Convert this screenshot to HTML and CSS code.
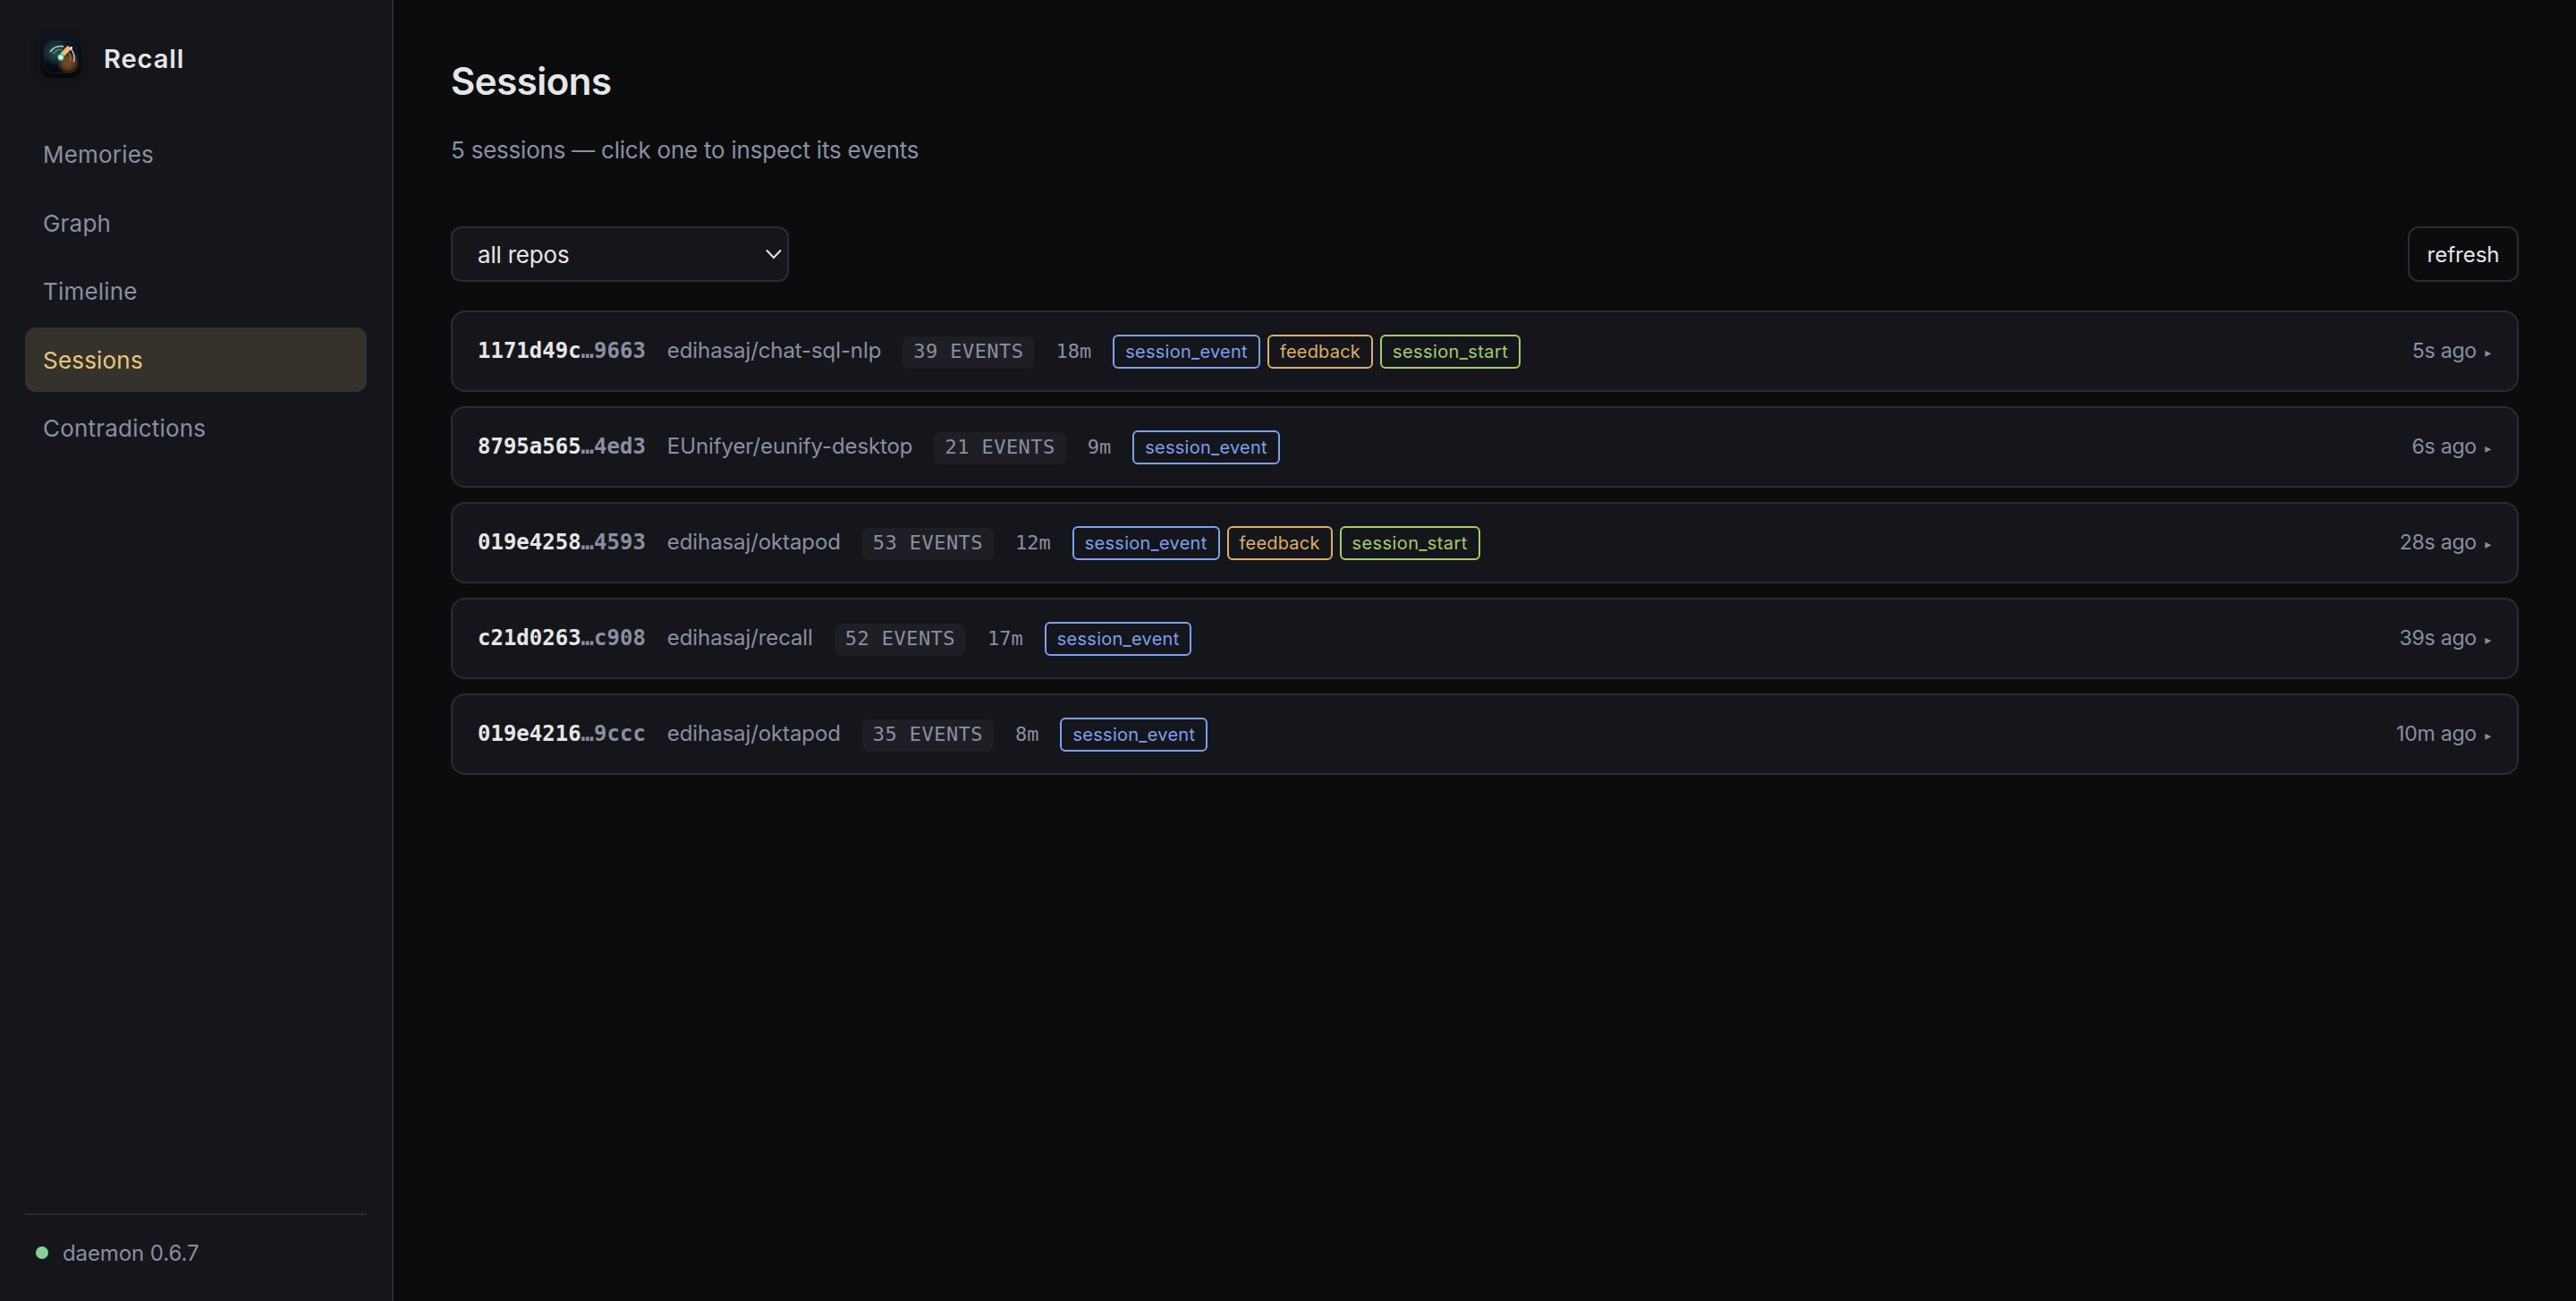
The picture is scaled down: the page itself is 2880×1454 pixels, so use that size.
FILE: index.html
```html
<!DOCTYPE html>
<html lang="en">
<head>
    <meta charset="UTF-8">
    <meta name="viewport" content="width=device-width, initial-scale=1.0">
    <title>Recall</title>
    <link rel="stylesheet" href="styles.css">
</head>
<body>
    <aside class="sidebar">
        <div class="brand">
            <svg class="logo" viewBox="0 0 56 56">
                <defs>
                    <linearGradient id="tile" x1="0" y1="0" x2="0" y2="1">
                        <stop offset="0" stop-color="#0b1520"/>
                        <stop offset="1" stop-color="#07080b"/>
                    </linearGradient>
                    <radialGradient id="teal">
                        <stop offset="0" stop-color="#2a6a66" stop-opacity=".85"/>
                        <stop offset="1" stop-color="#2a6a66" stop-opacity="0"/>
                    </radialGradient>
                    <radialGradient id="amber">
                        <stop offset="0" stop-color="#7d5228" stop-opacity=".95"/>
                        <stop offset=".5" stop-color="#7d5228" stop-opacity=".75"/>
                        <stop offset="1" stop-color="#7d5228" stop-opacity="0"/>
                    </radialGradient>
                    <radialGradient id="core">
                        <stop offset="0" stop-color="#ffffff"/>
                        <stop offset=".4" stop-color="#c8fff0"/>
                        <stop offset="1" stop-color="#35b59c"/>
                    </radialGradient>
                </defs>
                <rect width="56" height="56" rx="14" fill="#131418"/>
                <rect x="5" y="5" width="46" height="46" rx="11" fill="url(#tile)"/>
                <circle cx="22" cy="22" r="16" fill="url(#teal)"/>
                <circle cx="36" cy="34" r="13" fill="url(#amber)"/>
                <rect x="10.500" y="10.500" width="35" height="35" rx="9" fill="none" stroke="#ffffff" stroke-opacity=".07"/>
                <path d="M16 22A15 15 0 0 1 31 16" fill="none" stroke="#c9dedd" stroke-width="1.300"/>
                <path d="M39 18.500A15 15 0 0 1 42.500 33" fill="none" stroke="#e0d8cc" stroke-width="1.300"/>
                <path d="M19.500 24A10.500 10.500 0 0 1 29 19.500" fill="none" stroke="#9fc0be" stroke-opacity=".7"/>
                <path d="M37 22.500A10.500 10.500 0 0 1 38.500 32" fill="none" stroke="#c9b090" stroke-opacity=".7"/>
                <path d="M27.500 23.500L36 14.800L39.500 19.200L32 26.500Z" fill="#f5b766"/>
                <circle cx="39.500" cy="17.500" r="1.500" fill="#fff3dc"/>
                <circle cx="28" cy="28" r="3.700" fill="url(#core)"/>
            </svg>
            <span class="brand-name">Recall</span>
        </div>
        <nav class="nav">
            <a class="nav-item">Memories</a>
            <a class="nav-item">Graph</a>
            <a class="nav-item">Timeline</a>
            <a class="nav-item active">Sessions</a>
            <a class="nav-item">Contradictions</a>
        </nav>
        <div class="status">
            <span class="dot"></span>
            <span>daemon 0.6.7</span>
        </div>
    </aside>

    <main class="content">
        <h1>Sessions</h1>
        <p class="subtitle">5 sessions — click one to inspect its events</p>

        <div class="toolbar">
            <div class="select-wrap">
                <select class="repo-select">
                    <option>all repos</option>
                </select>
                <svg class="chevron" viewBox="0 0 18 12"><path d="M1 1.500L9 10L17 1.500" fill="none" stroke="#e6e6e6" stroke-width="2"/></svg>
            </div>
            <button class="refresh">refresh</button>
        </div>

        <div class="session-list">
            <div class="session">
                <span class="sid">1171d49c<span class="sid-end">…9663</span></span>
                <span class="repo">edihasaj/chat-sql-nlp</span>
                <span class="count">39 EVENTS</span>
                <span class="duration">18m</span>
                <span class="tags">
                    <span class="tag event">session_event</span>
                    <span class="tag feedback">feedback</span>
                    <span class="tag start">session_start</span>
                </span>
                <span class="ago">5s ago <span class="arrow">▸</span></span>
            </div>
            <div class="session">
                <span class="sid">8795a565<span class="sid-end">…4ed3</span></span>
                <span class="repo">EUnifyer/eunify-desktop</span>
                <span class="count">21 EVENTS</span>
                <span class="duration">9m</span>
                <span class="tags">
                    <span class="tag event">session_event</span>
                </span>
                <span class="ago">6s ago <span class="arrow">▸</span></span>
            </div>
            <div class="session">
                <span class="sid">019e4258<span class="sid-end">…4593</span></span>
                <span class="repo">edihasaj/oktapod</span>
                <span class="count">53 EVENTS</span>
                <span class="duration">12m</span>
                <span class="tags">
                    <span class="tag event">session_event</span>
                    <span class="tag feedback">feedback</span>
                    <span class="tag start">session_start</span>
                </span>
                <span class="ago">28s ago <span class="arrow">▸</span></span>
            </div>
            <div class="session">
                <span class="sid">c21d0263<span class="sid-end">…c908</span></span>
                <span class="repo">edihasaj/recall</span>
                <span class="count">52 EVENTS</span>
                <span class="duration">17m</span>
                <span class="tags">
                    <span class="tag event">session_event</span>
                </span>
                <span class="ago">39s ago <span class="arrow">▸</span></span>
            </div>
            <div class="session">
                <span class="sid">019e4216<span class="sid-end">…9ccc</span></span>
                <span class="repo">edihasaj/oktapod</span>
                <span class="count">35 EVENTS</span>
                <span class="duration">8m</span>
                <span class="tags">
                    <span class="tag event">session_event</span>
                </span>
                <span class="ago">10m ago <span class="arrow">▸</span></span>
            </div>
        </div>
    </main>
</body>
</html>
```

FILE: styles.css
```css
*{
    box-sizing: border-box;
}
body{
    margin: 0;
    height: 100vh;
    display: flex;
    background-color: #0b0c0e;
    color: #e6e6e6;
    font-family: Inter, "Liberation Sans", sans-serif;
    font-size: 26px;
    line-height: 39px;
}

/* sidebar */
.sidebar{
    width: 440px;
    flex-shrink: 0;
    display: flex;
    flex-direction: column;
    padding: 36px 28px 32px;
    background-color: #15161b;
    border-right: 2px solid #2b2b34;
}
.brand{
    display: flex;
    align-items: center;
    gap: 20px;
    height: 56px;
    padding-left: 12px;
    margin-bottom: 44px;
}
.logo{
    width: 56px;
    height: 56px;
    border-radius: 14px;
    box-shadow: 0 2px 6px rgba(0,0,0,0.2);
}
.brand-name{
    padding-top: 2px;
    font-size: 29px;
    font-weight: 600;
    letter-spacing: 0.95px;
}
.nav{
    display: flex;
    flex-direction: column;
    gap: 4px;
}
.nav-item{
    height: 72.5px;
    padding: 0 20px;
    line-height: 73px;
    border-radius: 12px;
    color: #8a8fa1;
    letter-spacing: 0.2px;
}
.nav-item.active{
    background-color: #35322b;
    color: #e8c77b;
}
.status{
    display: flex;
    align-items: center;
    gap: 16px;
    margin-top: auto;
    padding: 20px 12px 0;
    border-top: 2px solid #2b2b34;
    height: 66px;
    font-size: 24px;
    color: #8a8fa1;
    letter-spacing: -0.1px;
}
.dot{
    width: 14px;
    height: 14px;
    border-radius: 50%;
    background-color: #86cf9b;
}

/* main column */
.content{
    flex: 1;
    padding: 64px 64px 0;
}
h1{
    margin: 0;
    font-size: 42px;
    line-height: 54px;
    font-weight: 600;
    letter-spacing: -0.5px;
}
.subtitle{
    margin: 30px 0 66px;
    color: #8a8fa1;
    letter-spacing: -0.23px;
}
.toolbar{
    display: flex;
    justify-content: space-between;
    margin-bottom: 32px;
}
.select-wrap{
    position: relative;
    width: 378px;
    height: 62px;
}
.repo-select{
    appearance: none;
    width: 100%;
    height: 100%;
    padding: 0 28px;
    background-color: #15161b;
    border: 2px solid #2b2b34;
    border-radius: 12px;
    color: #e6e6e6;
    font: inherit;
    letter-spacing: -0.2px;
}
.chevron{
    position: absolute;
    right: 8px;
    top: 25px;
    width: 18px;
    height: 12px;
}
.refresh{
    width: 124px;
    height: 62px;
    padding: 0;
    background: transparent;
    border: 2px solid #2b2b34;
    border-radius: 12px;
    color: #e6e6e6;
    font: inherit;
    font-size: 24px;
}

/* session rows */
.session-list{
    display: flex;
    flex-direction: column;
    gap: 16px;
}
.session{
    display: flex;
    align-items: baseline;
    gap: 24px;
    height: 91px;
    padding: 23px 28px 0;
    background-color: #15161b;
    border: 2px solid #2b2b34;
    border-radius: 16px;
    color: #8a8fa1;
    white-space: nowrap;
}
.sid{
    font-family: "DejaVu Sans Mono", monospace;
    font-size: 24px;
    font-weight: 700;
    color: #e6e6e6;
}
.sid-end{
    color: #8a8fa1;
}
.repo{
    font-size: 24px;
    letter-spacing: -0.1px;
}
.count{
    padding: 0 12px;
    height: 36px;
    line-height: 34px;
    background-color: #1e1f24;
    border-radius: 8px;
    font-family: "DejaVu Sans Mono", monospace;
    font-size: 22px;
    letter-spacing: 0.44px;
}
.duration{
    font-family: "DejaVu Sans Mono", monospace;
    font-size: 22px;
}
.tags{
    display: flex;
    gap: 8px;
}
.tag{
    height: 38px;
    padding: 0 12px;
    line-height: 34px;
    border: 2px solid;
    border-radius: 6px;
    font-size: 20px;
    letter-spacing: 0.2px;
}
.tag.event{
    color: #7d9ff0;
    letter-spacing: 0.27px;
}
.tag.feedback{
    color: #dcae68;
}
.tag.start{
    color: #a3cc6c;
    letter-spacing: 0.4px;
}
.ago{
    margin-left: auto;
    font-size: 23px;
    letter-spacing: -0.2px;
}
.arrow{
    margin: 0 1px 0 3px;
    font-family: "DejaVu Sans", sans-serif;
    font-size: 14px;
    vertical-align: 1px;
}
```
